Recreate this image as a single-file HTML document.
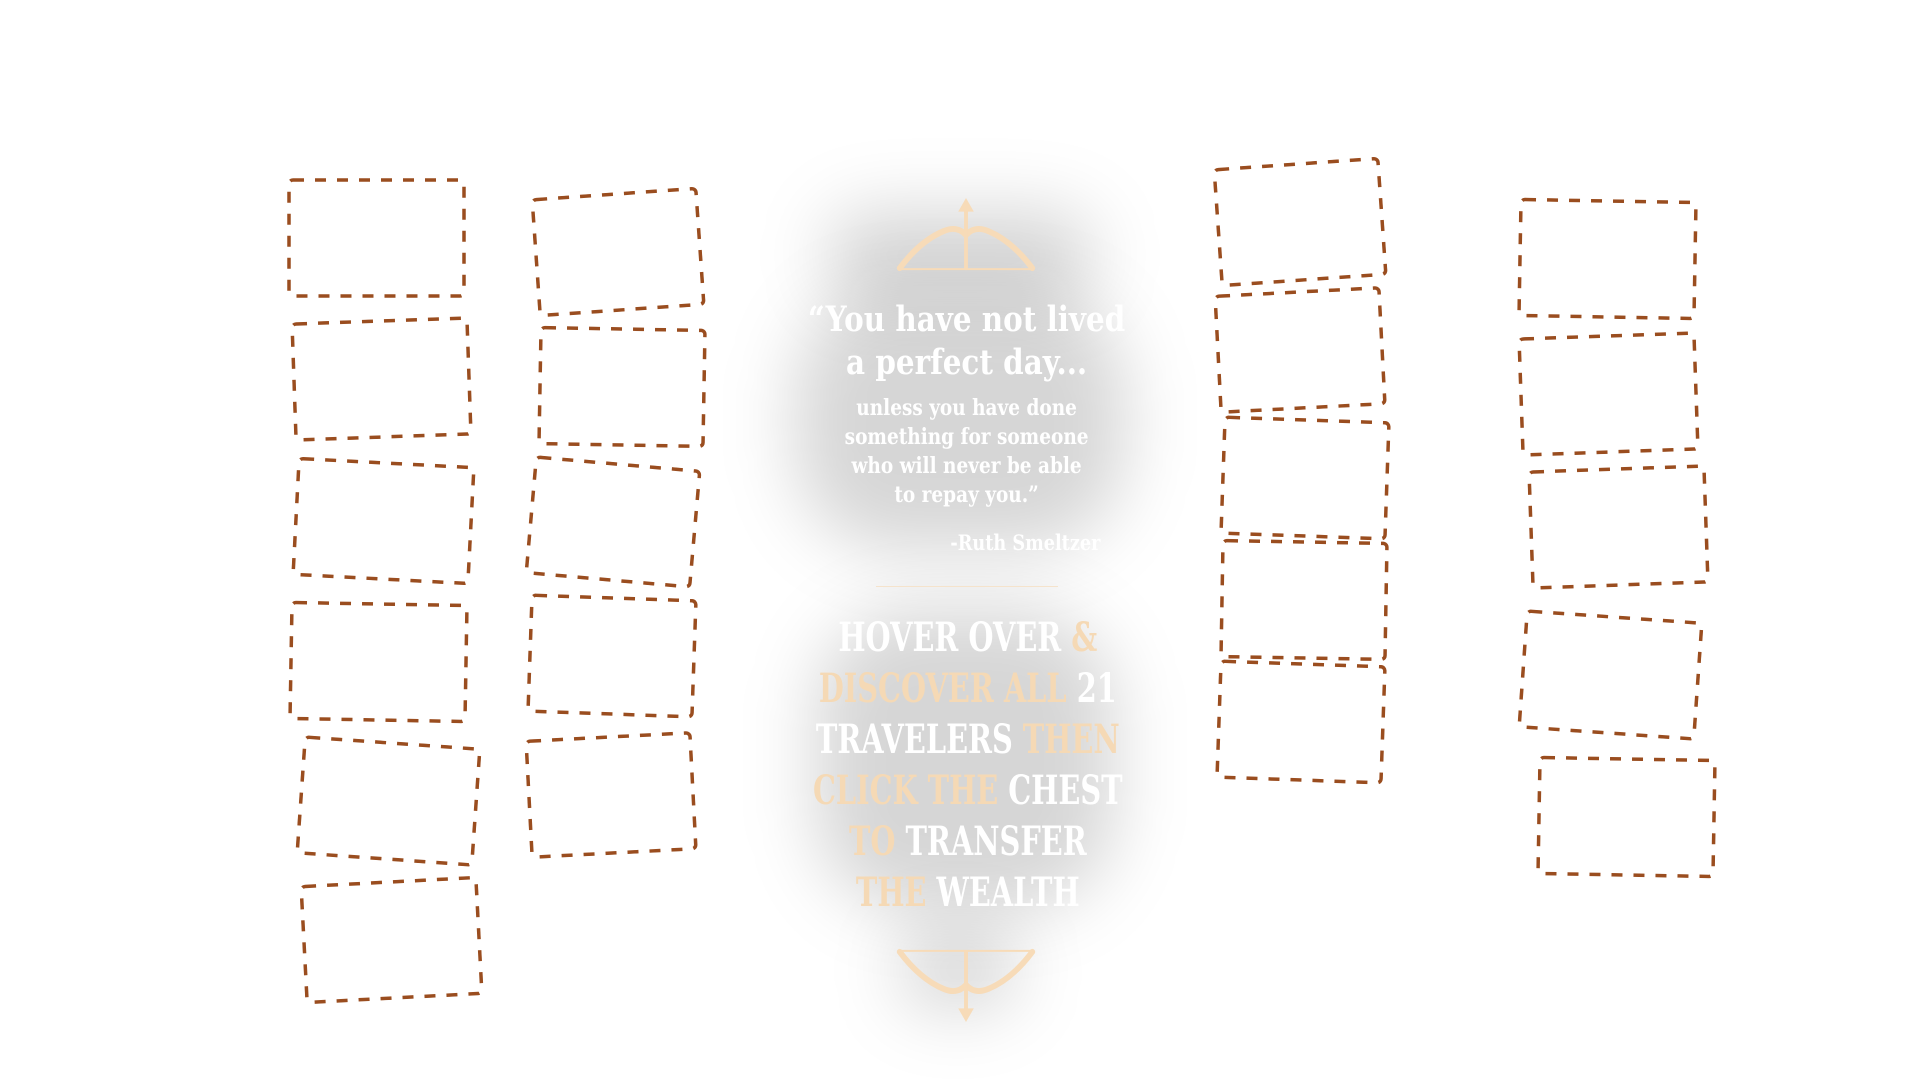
<!DOCTYPE html>
<html><head><meta charset="utf-8"><style>
html,body{margin:0;padding:0;width:1920px;height:1080px;background:#fff;overflow:hidden;position:relative}
.b{position:absolute;height:120px;margin-top:-60px}
.b svg{display:block}
.haze{position:absolute;background:rgba(0,0,0,.16);filter:blur(35px);border-radius:100px}
.t{position:absolute;left:565px;width:800px;text-align:center;font-family:"DejaVu Serif","Liberation Serif",serif;color:#fff;white-space:nowrap;transform:scaleX(0.84);transform-origin:410px 0}
.p{color:#f5d9b5}
</style></head><body>
<div class="haze" style="left:825px;top:210px;width:270px;height:90px"></div>
<div class="haze" style="left:795px;top:290px;width:330px;height:260px"></div>
<div class="haze" style="left:815px;top:610px;width:300px;height:300px"></div>
<div class="haze" style="left:898px;top:930px;width:120px;height:80px"></div>

<svg style="position:absolute;left:895px;top:198px" width="142" height="76" viewBox="0 0 142 78">
<g stroke="#f7dbb8" fill="none" stroke-linecap="round">
<path d="M3,72 Q24,44 48,34 Q62,28 71,38 Q80,28 94,34 Q118,44 139,72" stroke-width="6"/>
<line x1="2" y1="73" x2="140" y2="73" stroke-width="2"/>
<line x1="71" y1="8" x2="71" y2="72" stroke-width="4"/>
</g>
<polygon points="71,0 63,14 79,14" fill="#f7dbb8"/>
</svg>
<svg style="position:absolute;left:895px;top:946px" width="142" height="76" viewBox="0 0 142 78">
<g transform="translate(0,78) scale(1,-1)" stroke="#f7dbb8" fill="none" stroke-linecap="round">
<path d="M3,72 Q24,44 48,34 Q62,28 71,38 Q80,28 94,34 Q118,44 139,72" stroke-width="6"/>
<line x1="2" y1="73" x2="140" y2="73" stroke-width="2"/>
<line x1="71" y1="8" x2="71" y2="72" stroke-width="4"/>
<polygon points="71,0 63,14 79,14" fill="#f7dbb8" stroke="none"/>
</g>
</svg>

<div class="t" style="top:298px;font-size:35px;line-height:43px;font-weight:bold">“You have not lived<br>a perfect day...</div>
<div class="t" style="top:394px;font-size:22px;line-height:29px;font-weight:bold">unless you have done<br>something for someone<br>who will never be able<br>to repay you.”</div>
<div class="t" style="top:530px;font-size:21px;font-weight:bold;padding-left:140px;box-sizing:border-box">-Ruth Smeltzer</div>
<div style="position:absolute;left:876px;top:586px;width:182px;height:1px;background:#f5e3cc"></div>
<div class="t" style="top:612px;font-size:40px;line-height:51px;font-weight:bold;transform:scaleX(0.72)">HOVER OVER <span class="p">&amp;</span><br><span class="p">DISCOVER ALL</span> 21<br>TRAVELERS <span class="p">THEN</span><br><span class="p">CLICK THE</span> CHEST<br><span class="p">TO</span> TRANSFER<br><span class="p">THE</span> WEALTH</div>

<script>
const B=[[376,238,0,179],[381,379,-2,179],[383,521,3,179],[378,662,1,179],[388,801,4,179],[391,940,-3,179],
[618,252,-4,168],[622,387,1,168],[613,522,5,168],[612,656,2,168],[611,795,-3,168],
[1300,222,-4,168],[1300,350,-3,168],[1305,478,2,168],[1304,600,1,168],[1301,722,2,168],
[1607,259,1,179],[1608,394,-2,179],[1618,527,-2,179],[1610,675,4,179],[1626,817,1,179]];
let h='';
for(const [x,y,r,w] of B){h+=`<div class="b" style="left:${x-w/2}px;top:${y}px;width:${w}px;transform:rotate(${r}deg)"><svg width="${w}" height="120"><rect x="2" y="2" width="${w-4}" height="116" rx="4" fill="none" stroke="#9a4d1f" stroke-width="3.5" stroke-dasharray="11 11"/></svg></div>`}
document.body.insertAdjacentHTML('beforeend',h);
</script>
</body></html>
